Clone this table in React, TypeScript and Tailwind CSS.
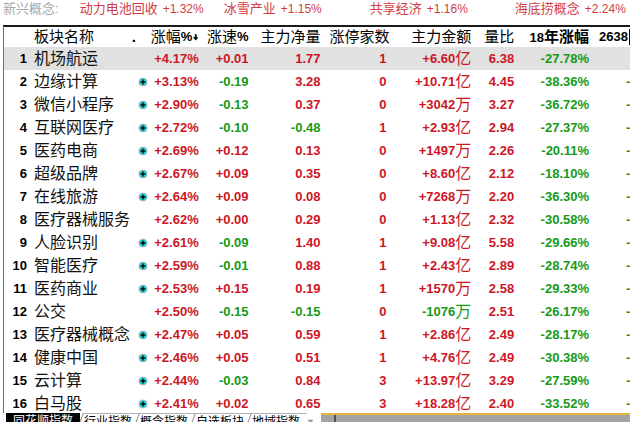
import React from 'react';

type Row = {
  no: number;
  name: string;
  dot: boolean;
  pct: string;
  speed: string;
  net: string;
  limit: string;
  amount: string;
  unit: string;
  ratio: string;
  year: string;
};

const rows: Row[] = [
  { no: 1, name: '机场航运', dot: false, pct: '+4.17%', speed: '+0.01', net: '1.77', limit: '1', amount: '+6.60', unit: '亿', ratio: '6.38', year: '-27.78%' },
  { no: 2, name: '边缘计算', dot: true, pct: '+3.13%', speed: '-0.19', net: '3.28', limit: '0', amount: '+10.71', unit: '亿', ratio: '4.45', year: '-38.36%' },
  { no: 3, name: '微信小程序', dot: true, pct: '+2.90%', speed: '-0.13', net: '0.37', limit: '0', amount: '+3042', unit: '万', ratio: '3.27', year: '-36.72%' },
  { no: 4, name: '互联网医疗', dot: true, pct: '+2.72%', speed: '-0.10', net: '-0.48', limit: '1', amount: '+2.93', unit: '亿', ratio: '2.94', year: '-27.37%' },
  { no: 5, name: '医药电商', dot: true, pct: '+2.69%', speed: '+0.12', net: '0.13', limit: '0', amount: '+1497', unit: '万', ratio: '2.26', year: '-20.11%' },
  { no: 6, name: '超级品牌', dot: true, pct: '+2.67%', speed: '+0.09', net: '0.35', limit: '0', amount: '+8.60', unit: '亿', ratio: '2.12', year: '-18.10%' },
  { no: 7, name: '在线旅游', dot: true, pct: '+2.64%', speed: '+0.09', net: '0.08', limit: '0', amount: '+7268', unit: '万', ratio: '2.20', year: '-36.30%' },
  { no: 8, name: '医疗器械服务', dot: false, pct: '+2.62%', speed: '+0.00', net: '0.29', limit: '0', amount: '+1.13', unit: '亿', ratio: '2.32', year: '-30.58%' },
  { no: 9, name: '人脸识别', dot: true, pct: '+2.61%', speed: '-0.09', net: '1.40', limit: '1', amount: '+9.08', unit: '亿', ratio: '5.58', year: '-29.66%' },
  { no: 10, name: '智能医疗', dot: true, pct: '+2.59%', speed: '-0.01', net: '0.88', limit: '1', amount: '+2.43', unit: '亿', ratio: '2.89', year: '-28.74%' },
  { no: 11, name: '医药商业', dot: true, pct: '+2.53%', speed: '+0.15', net: '0.19', limit: '1', amount: '+1570', unit: '万', ratio: '2.58', year: '-29.33%' },
  { no: 12, name: '公交', dot: false, pct: '+2.50%', speed: '-0.15', net: '-0.15', limit: '0', amount: '-1076', unit: '万', ratio: '2.51', year: '-26.17%' },
  { no: 13, name: '医疗器械概念', dot: true, pct: '+2.47%', speed: '+0.05', net: '0.59', limit: '1', amount: '+2.86', unit: '亿', ratio: '2.49', year: '-28.17%' },
  { no: 14, name: '健康中国', dot: true, pct: '+2.46%', speed: '+0.05', net: '0.51', limit: '1', amount: '+4.76', unit: '亿', ratio: '2.49', year: '-30.38%' },
  { no: 15, name: '云计算', dot: true, pct: '+2.44%', speed: '-0.03', net: '0.84', limit: '3', amount: '+13.97', unit: '亿', ratio: '3.29', year: '-27.59%' },
  { no: 16, name: '白马股', dot: true, pct: '+2.41%', speed: '+0.02', net: '0.65', limit: '3', amount: '+18.28', unit: '亿', ratio: '2.40', year: '-33.52%' },
];

const tone = (v: string) => (v.startsWith('-') ? 'text-[#159a1a]' : 'text-[#cc1626]');

const Dot = () => (
  <svg width="10" height="10" viewBox="0 0 10 10">
    <circle cx="5" cy="5" r="4.6" fill="#f2b8c0" />
    <circle cx="5" cy="5" r="3.8" fill="#18d2d2" />
    <path d="M5 2.6v4.8M2.6 5h4.8" stroke="#000" strokeWidth="1.3" />
  </svg>
);

const SortArrow = () => (
  <svg width="9" height="11" viewBox="0 0 9 11" className="ml-[1px]">
    <path d="M3 0h3v5h3L4.5 10.5 0 5h3z" fill="#000" />
  </svg>
);

const topItems = [
  { name: '动力电池回收', val: '+1.32%', gap: 'ml-[21px]' },
  { name: '冰雪产业', val: '+1.15%', gap: 'ml-[20px]' },
  { name: '共享经济', val: '+1.16%', gap: 'ml-[48px]' },
  { name: '海底捞概念', val: '+2.24%', gap: 'ml-[47px]' },
];

const tabs = ['行业指数', '概念指数', '自选板块', '地域指数'];

const App = () => {
  return (
    <div
      className="w-[630px] h-[422px] overflow-hidden bg-white relative"
      style={{ fontFamily: '"Liberation Sans", "Noto Sans CJK SC", sans-serif' }}
    >
      {/* ticker strip */}
      <div className="h-[25px] flex items-start pt-[1px] pl-[3px] text-[13px] leading-[16px] whitespace-nowrap">
        <span className="text-[#a8a8a8]">新兴概念:</span>
        {topItems.map((it) => (
          <span key={it.name} className={`${it.gap} flex items-center text-[#d23c46]`}>
            <span>{it.name}</span>
            <span className="ml-[5px] text-[12px]">{it.val}</span>
          </span>
        ))}
      </div>

      <div className="ml-[3px] border-l border-[#6c6c6c] border-t-2 border-t-[#1a1a1a]">
        {/* header */}
        <div className="h-[20px] flex items-center text-[15px] text-black whitespace-nowrap">
          <div className="w-[23px]" />
          <div className="w-[104px] pl-[7px]">板块名称</div>
          <div className="w-[20px] pl-[1px] font-bold">.</div>
          <div className="w-[48px] flex justify-end items-center">
            <span>涨幅</span>
            <span className="font-bold text-[13px]">%</span>
            <SortArrow />
          </div>
          <div className="w-[50px] flex justify-end items-center">
            <span>涨速</span>
            <span className="font-bold text-[13px]">%</span>
          </div>
          <div className="w-[72px] text-right">主力净量</div>
          <div className="w-[69px] text-right">涨停家数</div>
          <div className="w-[82px] text-right">主力金额</div>
          <div className="w-[43px] text-right">量比</div>
          <div className="w-[75px] text-right font-bold">
            <span className="text-[13px]">18</span>年涨幅
          </div>
          <div className="w-[41px] pl-[10px] flex items-center font-bold text-[13px]">
            <span>2638</span>
            <span className="ml-[1px] w-[1px] h-[16px] bg-black" />
          </div>
        </div>

        {/* rows */}
        {rows.map((r) => (
          <div
            key={r.no}
            className={`h-[23px] flex items-center whitespace-nowrap text-[13px] font-bold ${
              r.no === 1 ? 'bg-[#e1e1e1]' : ''
            }`}
          >
            <div className="w-[23px] text-right text-black">{r.no}</div>
            <div className="w-[104px] pl-[7px] text-[16px] font-normal text-[#111]">{r.name}</div>
            <div className="w-[20px] flex items-center pl-[7px]">{r.dot && <Dot />}</div>
            <div className={`w-[48px] text-right ${tone(r.pct)}`}>{r.pct}</div>
            <div className={`w-[50px] text-right ${tone(r.speed)}`}>{r.speed}</div>
            <div className={`w-[72px] text-right ${tone(r.net)}`}>{r.net}</div>
            <div className="w-[69px] text-right pr-[3px] text-[#cc1626]">{r.limit}</div>
            <div className={`w-[82px] flex justify-end items-center ${tone(r.amount)}`}>
              <span>{r.amount}</span>
              <span className="text-[16px] font-normal">{r.unit}</span>
            </div>
            <div className="w-[43px] text-right text-[#cc1626]">{r.ratio}</div>
            <div className="w-[75px] text-right text-[#159a1a]">{r.year}</div>
            <div className="w-[41px] pl-[37px] text-[#159a1a] overflow-hidden">{r.no === 1 ? '' : '-'}</div>
          </div>
        ))}
      </div>

      {/* bottom tabs */}
      <div className="absolute left-0 top-[413px] w-[630px] h-[16px] flex items-start text-[12px] leading-[16px] whitespace-nowrap bg-white">
        <div className="ml-[6px] w-[74px] h-[16px] bg-black text-white text-center">同花顺指数</div>
        {tabs.map((t) => (
          <div
            key={t}
            className="w-[56px] h-[16px] border-l border-[#8a8a8a] border-t border-t-[#b0b0b0] -skew-x-[20deg] text-center text-black"
          >
            <div className="skew-x-[20deg]">{t}</div>
          </div>
        ))}
        <div className="ml-[2px] mt-[1px] text-[#9a9a9a] text-[9px]">▼</div>
        <div className="ml-[6px] flex-1 h-[16px] border-t-2 border-[#e6b43a] bg-[#a4a4a4] flex">
          <div className="ml-[13px] w-[2px] h-[16px] bg-[#505050]" />
        </div>
      </div>
    </div>
  );
};

export default App;
